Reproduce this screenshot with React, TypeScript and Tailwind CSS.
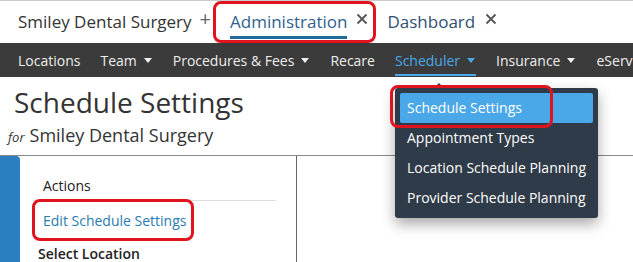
const navItems = [
  { label: "Locations" },
  { label: "Team", caret: true },
  { label: "Procedures & Fees", caret: true },
  { label: "Recare" },
  { label: "Scheduler", caret: true, active: true },
  { label: "Insurance", caret: true },
  { label: "eServices", caret: true },
];

const menuItems = ["Schedule Settings", "Appointment Types", "Location Schedule Planning", "Provider Schedule Planning"];

function Caret() {
  return <span className="ml-[7px] mr-[1px] inline-block h-0 w-0 border-x-[4px] border-t-[5px] border-x-transparent border-t-current" />;
}

function Close() {
  return (
    <svg width="12" height="12" viewBox="0 0 12 12" className="text-[#555]">
      <path d="M1.5 1.5 L10.5 10.5 M10.5 1.5 L1.5 10.5" stroke="currentColor" strokeWidth="1.8" />
    </svg>
  );
}

export default function App() {
  return (
    <div className="relative h-[262px] w-[633px] overflow-hidden bg-white font-['Open_Sans',sans-serif] text-[#333]">
      {/* tab strip */}
      <div className="flex h-[43px] items-center border-t border-[#ccc] pl-[18px]">
        <span className="text-[17px] text-[#333]">Smiley Dental Surgery</span>
        <span className="ml-[8px] -mt-[6px] text-[20px] leading-none text-[#666]">+</span>
        <div className="relative ml-[19px] flex h-full items-center">
          <span className="text-[17px] text-[#2f5f8f]">Administration</span>
          <span className="ml-[9px] -mt-[6px]"><Close /></span>
          <div className="absolute bottom-[4px] left-0 h-[3px] w-[117px] bg-[#1f6b9a]" />
        </div>
        <span className="ml-[19px] text-[17px] text-[#2f4f6f]">Dashboard</span>
        <span className="ml-[10px] -mt-[6px]"><Close /></span>
      </div>

      {/* main nav */}
      <nav className="flex h-[34px] items-center gap-[20px] bg-[#3b3b3b] pl-[18px] text-[14px] text-[#eee]">
        {navItems.map((item) => (
          <div key={item.label} className={`relative flex items-center whitespace-nowrap ${item.active ? "text-[#4aa8e8]" : ""}`}>
            {item.label}
            {item.caret ? <Caret /> : null}
            {item.active ? <div className="absolute -bottom-[5px] left-0 right-0 h-[2px] bg-[#4aa8e8]" /> : null}
          </div>
        ))}
      </nav>

      {/* heading */}
      <div className="px-[14px] pt-[6px]">
        <h1 className="text-[28px] leading-[38px] text-[#333]">Schedule Settings</h1>
        <p className="-ml-[6px] mt-[2px] text-[18px] leading-[24px] text-[#333]">
          <span className="mr-[5px] text-[13px] italic">for</span>Smiley Dental Surgery
        </p>
      </div>

      {/* panel */}
      <div className="mt-[6px] flex h-[110px] border-t border-[#888]">
        <div className="w-[20px] rounded-tr-[4px] bg-[#2a7fc1]" />
        <div className="w-[277px] border-r border-[#666] pl-[13px] pr-[20px]">
          <div className="border-b border-[#ddd] pb-[4px] pl-[10px] pt-[19px] text-[14px] font-medium text-[#222]">Actions</div>
          <div className="pl-[10px] pt-[9px] text-[14px] text-[#2a7ab0]">Edit Schedule Settings</div>
          <div className="pl-[5px] pt-[12px] text-[14px] font-semibold text-[#222]">Select Location</div>
        </div>
        <div className="flex-1" />
      </div>

      {/* scheduler dropdown */}
      <div className="absolute left-[395px] top-[88px] w-[203px] rounded-[3px] bg-[#2f3b48] px-[5px] py-[5px] text-[14px] text-white shadow-[0_6px_14px_rgba(0,0,0,0.35)]">
        <div className="absolute -top-[5px] left-[38px] h-0 w-0 border-x-[6px] border-b-[6px] border-x-transparent border-b-[#2f3b48]" />
        {menuItems.map((m, i) => (
          <div key={m} className={`h-[30px] rounded-[2px] pl-[7px] leading-[30px] ${i === 0 ? "bg-[#4ba8e8]" : ""}`}>{m}</div>
        ))}
      </div>

      {/* annotation highlights */}
      <div className="absolute left-[213px] top-[1px] h-[42px] w-[163px] rounded-[8px] border-[3px] border-[#e0141e]" />
      <div className="absolute left-[390px] top-[85px] h-[43px] w-[163px] rounded-[8px] border-[3px] border-[#e0141e]" />
      <div className="absolute left-[32px] top-[199px] h-[42px] w-[162px] rounded-[8px] border-[3px] border-[#e0141e]" />
    </div>
  );
}
